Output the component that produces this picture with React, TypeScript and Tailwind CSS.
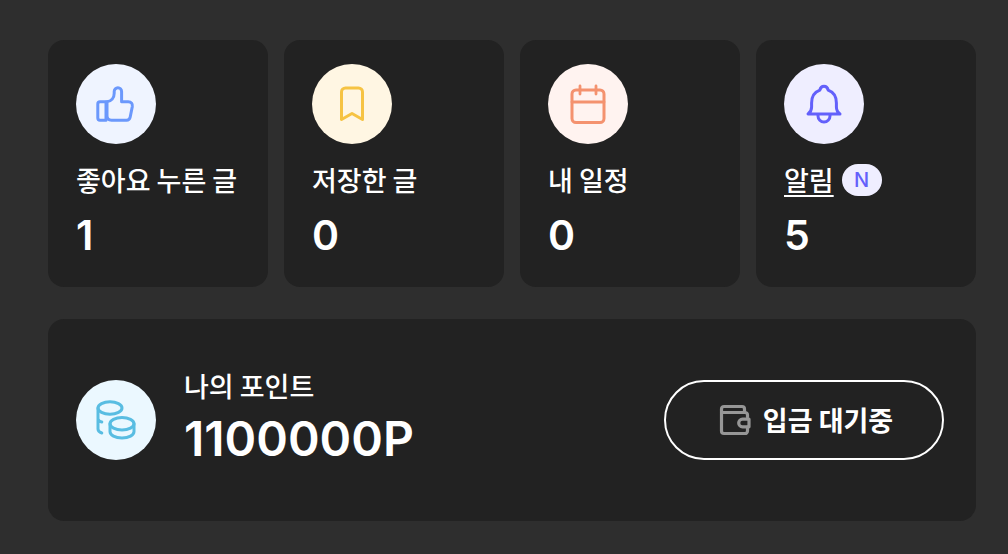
import type { ReactNode } from 'react';

const hangul = "font-['Noto_Sans_CJK_KR',sans-serif]";
const latin = "font-['Inter',sans-serif]";

function Icon({ children, className }: { children: ReactNode; className: string }) {
  return (
    <span className={`block size-20 shrink-0 rounded-full ${className}`}>
      <svg viewBox="0 0 80 80" className="size-full" fill="none" stroke="currentColor" strokeWidth="3" strokeLinecap="round" strokeLinejoin="round" aria-hidden="true">
        {children}
      </svg>
    </span>
  );
}

const stats = [
  {
    label: '좋아요 누른 글',
    count: 1,
    tone: 'bg-[#eff4ff] text-[#6b98fc]',
    drawing: (
      <>
        <path d="M24 37.8H30V56.2H24A2.2 2.2 0 0 1 21.8 54V40A2.2 2.2 0 0 1 24 37.8Z" />
        <path d="M30.6 37.8C35.5 37.4 38.2 33.8 38.2 29.2V27.5A3.7 3.7 0 0 1 45.6 27.5V37.8H52.2C55.3 37.8 56.8 39.8 56.3 42.6L54.2 53C53.8 55 52.6 56.2 50.6 56.2H35.5C32.6 56.2 31 54.5 31 51.5V38" />
      </>
    ),
  },
  {
    label: '저장한 글',
    count: 0,
    tone: 'bg-[#fff6e3] text-[#f6c343]',
    drawing: <path d="M29.5 55.5V28A4 4 0 0 1 33.5 24H46.5A4 4 0 0 1 50.5 28V55.5L40 49.5Z" />,
  },
  {
    label: '내 일정',
    count: 0,
    tone: 'bg-[#fff3f0] text-[#f4926f]',
    drawing: (
      <>
        <rect x="24" y="26" width="32" height="32.5" rx="4" />
        <path d="M24 38H56M32 22V30M48 22V30" strokeWidth="2.8" />
      </>
    ),
  },
  {
    label: '알림',
    count: 5,
    badge: 'N',
    tone: 'bg-[#efeeff] text-[#6360fb]',
    drawing: (
      <>
        <path d="M24 50H56C53.6 48.3 52.4 46 52.4 43V39C52.4 32.7 49.6 28.2 44.2 26.2C43.6 23.7 42.2 22.3 40 22.3S36.4 23.7 35.8 26.2C30.4 28.2 27.6 32.7 27.6 39V43C27.6 46 26.4 48.3 24 50Z" />
        <path d="M34 50.5V52A6 6 0 0 0 46 52V50.5" />
      </>
    ),
  },
];

export default function App() {
  return (
    <main className={`min-h-screen bg-[#2e2e2e] py-10 pr-8 pl-12 text-white ${hangul}`}>
      <ul className="grid grid-cols-4 gap-4">
        {stats.map((item) => (
          <li key={item.label} className="rounded-2xl bg-[#222] px-7 pt-6 pb-6">
            <Icon className={item.tone}>{item.drawing}</Icon>
            <div className="mt-4 flex h-10 items-center gap-2 whitespace-nowrap">
              {item.badge ? (
                <>
                  <a href="#notifications" className="text-[27px] leading-[38px] font-medium underline decoration-2 underline-offset-4">
                    {item.label}
                  </a>
                  <span className={`flex h-8 w-10 items-center justify-center rounded-full bg-[#efeeff] text-[20px] font-medium text-[#6360fb] ${latin}`}>
                    {item.badge}
                  </span>
                </>
              ) : (
                <span className="text-[27px] leading-[38px] font-medium">{item.label}</span>
              )}
            </div>
            <p className={`mt-2 text-[41px] leading-[55px] font-semibold ${latin}`}>{item.count}</p>
          </li>
        ))}
      </ul>
      <section className="mt-8 flex items-center rounded-2xl bg-[#222] py-12 pr-8 pl-7">
        <Icon className="bg-[#ebf8ff] text-[#59bde2]">
          <ellipse cx="34" cy="28" rx="12" ry="6.2" />
          <path d="M22 28V49C22 51 23.5 52.3 25.8 53M22 39C22.8 40.9 24 41.7 25.8 42" />
          <ellipse cx="46" cy="43.7" rx="12" ry="6.2" />
          <path d="M34 43.7V51.5C34 55.2 39.2 58 46 58S58 55.2 58 51.5V43.7" />
        </Icon>
        <div className="ml-7 grow">
          <p className="text-[27px] leading-[38px] font-medium">나의 포인트</p>
          <p className={`text-[48px] leading-[68px] font-semibold ${latin}`}>1100000P</p>
        </div>
        <button type="button" className="flex h-20 w-70 items-center justify-center gap-3 rounded-full border-2 border-white pl-1 text-[27px] font-bold">
          <svg viewBox="0 0 32 32" className="size-8" fill="none" stroke="#969696" strokeWidth="3.2" strokeLinejoin="round" strokeLinecap="round" aria-hidden="true">
            <path d="M28.5 13V11A2.5 2.5 0 0 0 26 8.5H2.5M25.5 8V5A2.5 2.5 0 0 0 23 2.5H5A2.5 2.5 0 0 0 2.5 5V27A2.5 2.5 0 0 0 5 29.5H26A2.5 2.5 0 0 0 28.5 27V23" />
            <path d="M30 15.2H23.5A3.8 3.8 0 0 0 23.5 22.8H30Z" />
          </svg>
          <span>입금 대기중</span>
        </button>
      </section>
    </main>
  );
}
